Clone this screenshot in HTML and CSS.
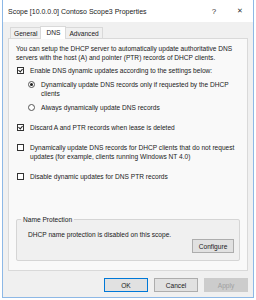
FILE: index.html
```html
<!DOCTYPE html>
<html lang="en">

<head>
    <meta charset="UTF-8">
    <title>Scope Properties</title>
    <link rel="stylesheet" href="styles.css">
</head>

<body>
    <div class="window">
        <div class="title-bar">
            <span class="title">Scope [10.0.0.0] Contoso Scope3 Properties</span>
            <span class="title-btn">?</span>
            <span class="title-btn close">&#x2715;</span>
        </div>

        <div class="client">
            <div class="tabs">
                <div class="tab">General</div>
                <div class="tab active">DNS</div>
                <div class="tab">Advanced</div>
            </div>

            <div class="panel">
                <p class="intro">You can setup the DHCP server to automatically update authoritative DNS servers with the host (A) and pointer (PTR) records of DHCP clients.</p>

                <div class="option">
                    <span class="check checked"></span>
                    <span class="label">Enable DNS dynamic updates according to the settings below:</span>
                </div>

                <div class="option sub">
                    <span class="radio checked"></span>
                    <span class="label">Dynamically update DNS records only if requested by the DHCP clients</span>
                </div>

                <div class="option sub">
                    <span class="radio"></span>
                    <span class="label">Always dynamically update DNS records</span>
                </div>

                <div class="option gap">
                    <span class="check checked"></span>
                    <span class="label">Discard A and PTR records when lease is deleted</span>
                </div>

                <div class="option gap">
                    <span class="check"></span>
                    <span class="label">Dynamically update DNS records for DHCP clients that do not request updates (for example, clients running Windows NT 4.0)</span>
                </div>

                <div class="option gap">
                    <span class="check"></span>
                    <span class="label">Disable dynamic updates for DNS PTR records</span>
                </div>

                <fieldset class="group">
                    <legend>Name Protection</legend>
                    <p>DHCP name protection is disabled on this scope.</p>
                    <div class="group-actions">
                        <button class="btn">Configure</button>
                    </div>
                </fieldset>
            </div>

            <div class="footer">
                <button class="btn default">OK</button>
                <button class="btn">Cancel</button>
                <button class="btn" disabled>Apply</button>
            </div>
        </div>
    </div>
</body>

</html>
```

FILE: styles.css
```css
* {
    margin: 0;
    padding: 0;
    box-sizing: border-box;
}

body {
    font-family: 'Liberation Sans', Arial, sans-serif;
    font-size: 6.6px;
    color: #1a1a1a;
    background: #ffffff;
}

.window {
    margin-left: 2px;
    width: 252px;
    height: 298px;
    border: 1px solid #8db8e6;
    border-top: none;
    display: flex;
    flex-direction: column;
}

.title-bar {
    height: 22px;
    background: #ffffff;
    display: flex;
    align-items: center;
    padding-left: 5px;
    font-size: 7px;
}

.title {
    flex: 1;
}

.title-btn {
    width: 26px;
    text-align: center;
    font-size: 8px;
    color: #333;
}

.close {
    font-size: 7px;
}

.client {
    flex: 1;
    background: #f0f0f0;
    padding: 3px 5px 0 5px;
    display: flex;
    flex-direction: column;
}

/* tabs */
.tabs {
    display: flex;
    align-items: flex-end;
    height: 13px;
    padding-left: 2px;
}

.tab {
    height: 11px;
    padding: 0 3px;
    line-height: 11px;
    border: 1px solid #d9d9d9;
    border-bottom: none;
    background: #f0f0f0;
}

.tab + .tab {
    margin-left: -1px;
}

.tab.active {
    height: 13px;
    line-height: 12px;
    padding: 0 5px;
    background: #ffffff;
    position: relative;
    z-index: 1;
    margin-bottom: -1px;
}

.panel {
    height: 233px;
    border: 1px solid #d9d9d9;
    background: #f9f9f9;
    padding: 5px 7px 0 7px;
}

.intro {
    line-height: 9px;
    margin-bottom: 2px;
}

/* checkbox / radio rows */
.option {
    display: flex;
    align-items: flex-start;
    line-height: 9px;
    margin-top: 4px;
}

.option.sub {
    padding-left: 11px;
    margin-top: 5px;
}

.option.gap {
    margin-top: 11px;
}

.label {
    flex: 1;
}

.check,
.radio {
    width: 7px;
    height: 7px;
    margin: 1px 6px 0 1px;
    border: 1px solid #333;
    background: #fff;
    flex-shrink: 0;
    position: relative;
}

.check.checked::after {
    content: "";
    position: absolute;
    left: 1px;
    top: 0;
    width: 2px;
    height: 3px;
    border: solid #222;
    border-width: 0 1px 1px 0;
    transform: rotate(40deg);
}

.radio {
    border-radius: 50%;
    border-color: #555;
}

.radio.checked::after {
    content: "";
    position: absolute;
    left: 1px;
    top: 1px;
    width: 3px;
    height: 3px;
    border-radius: 50%;
    background: #222;
}

/* group box */
.group {
    margin-top: 35px;
    border: 1px solid #d5d5d5;
    border-radius: 2px;
    height: 45px;
    padding: 4px 5px 0 11px;
    background: #f0f0f0;
}

.group legend {
    padding: 0 2px;
    margin-left: -7px;
}

.group p {
    margin-top: 4px;
}

.group-actions {
    display: flex;
    justify-content: flex-end;
    margin-top: 1px;
}

/* buttons */
.btn {
    font-family: inherit;
    font-size: 6.6px;
    width: 44px;
    height: 14px;
    border: 1px solid #adadad;
    background: #e1e1e1;
    color: #1a1a1a;
}

.group .btn {
    width: 42px;
}

.btn.default {
    border-color: #0078d7;
}

.btn:disabled {
    border-color: #cccccc;
    background: #cccccc;
    color: #a0a0a0;
}

.footer {
    display: flex;
    justify-content: flex-end;
    gap: 6px;
    padding-top: 7px;
}
```
